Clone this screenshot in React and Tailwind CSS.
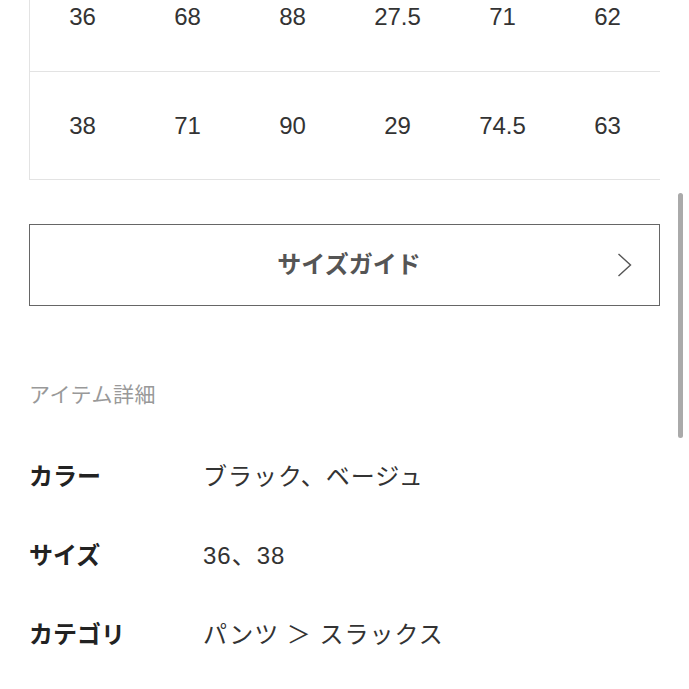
import React from 'react';

const rows = [
  ['36', '68', '88', '27.5', '71', '62'],
  ['38', '71', '90', '29', '74.5', '63'],
];

const details = [
  { label: 'カラー', value: 'ブラック、ベージュ' },
  { label: 'サイズ', value: '36、38' },
  { label: 'カテゴリ', value: 'パンツ ＞ スラックス' },
];

const font = { fontFamily: '"Liberation Sans", "Noto Sans CJK JP", sans-serif' };

export default function App() {
  return (
    <div className="relative w-[689px] h-[689px] overflow-hidden bg-white" style={font}>
      <div className="pl-[29px] pr-[29px]">
        {/* size table, scrolled so its head is off screen */}
        <div className="-mt-[38px] border-l border-b border-[#e3e3e3] overflow-hidden">
          {rows.map((r, i) => (
            <div
              key={i}
              className={`grid grid-cols-6 items-center ${i === 0 ? 'h-[110px] border-b border-[#e3e3e3]' : 'h-[107px]'}`}
            >
              {r.map((v, j) => (
                <div key={j} className="text-center text-[24px] text-[#333]">
                  {v}
                </div>
              ))}
            </div>
          ))}
        </div>

        <button className="relative mt-[44px] w-full h-[82px] border border-[#666] bg-white flex items-center justify-center pl-[9px]">
          <span className="text-[24px] font-bold text-[#555]">サイズガイド</span>
          <svg
            className="absolute right-[27px] top-1/2 -translate-y-1/2"
            width="15"
            height="25"
            viewBox="0 0 15 25"
            fill="none"
          >
            <path d="M1.5 1.5 L13.5 12.5 L1.5 23.5" stroke="#555" strokeWidth="1.4" />
          </svg>
        </button>

        <div className="mt-[74px] text-[21px] leading-[30px] tracking-[0.5px] text-[#999]">アイテム詳細</div>

        <div className="mt-[52px] flex flex-col gap-[49px]">
          {details.map((d) => (
            <div key={d.label} className="flex items-center h-[30px]">
              <div className="w-[174px] text-[24px] font-bold text-[#222]">{d.label}</div>
              <div className="text-[24px] tracking-[1px] text-[#333]">{d.value}</div>
            </div>
          ))}
        </div>
      </div>

      {/* overlay scrollbar */}
      <div className="absolute left-[678px] top-[193px] w-[5px] h-[245px] rounded-full bg-[#aaa]" />
    </div>
  );
}
